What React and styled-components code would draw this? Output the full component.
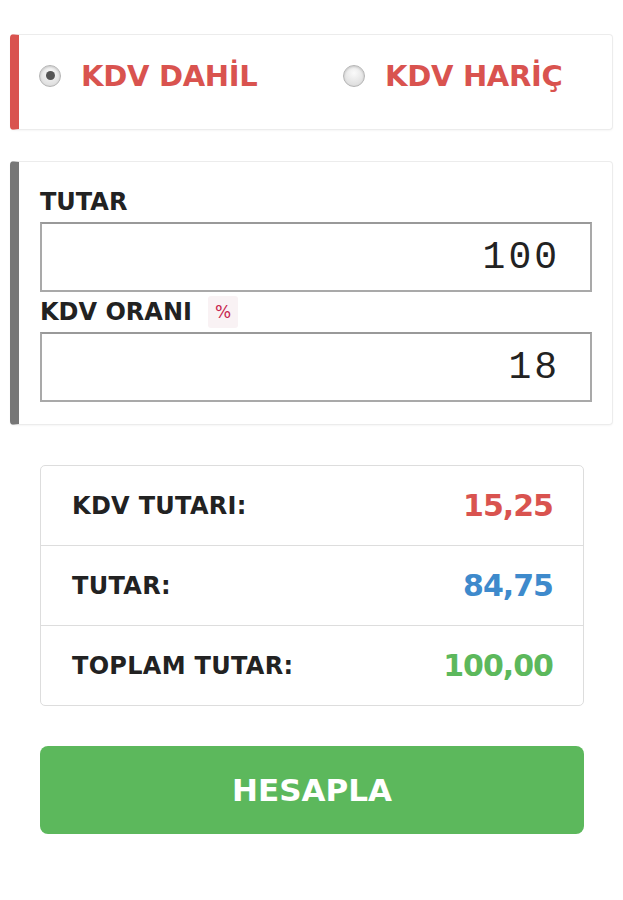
import React, { useState } from "react";
import styled, { createGlobalStyle } from "styled-components";

const GlobalStyle = createGlobalStyle`
  html, body {
    margin: 0;
    padding: 0;
    background: #fff;
  }
  body {
    font-family: "DejaVu Sans", "Liberation Sans", sans-serif;
    color: #222;
  }
`;

const Page = styled.div`
  width: 623px;
  padding: 34px 10px 40px;
  box-sizing: border-box;
`;

const Panel = styled.section`
  border: 1px solid #ececec;
  border-left: 9px solid ${(p) => p.accent};
  border-radius: 4px;
  box-shadow: 0 1px 2px rgba(0, 0, 0, 0.04);
  background: #fff;
  box-sizing: border-box;
  margin-bottom: 31px;
`;

const TypePanel = styled(Panel)`
  height: 96px;
  display: grid;
  grid-template-columns: 304px 1fr;
  align-items: center;
  padding: 0 0 13px 20px;
`;

const Option = styled.label`
  display: flex;
  align-items: center;
  gap: 20px;
  cursor: pointer;
  font-size: 29px;
  font-weight: 700;
  color: #d9534f;
  letter-spacing: -0.3px;
`;

const RadioDot = styled.span`
  width: 22px;
  height: 22px;
  border-radius: 50%;
  box-sizing: border-box;
  border: 1px solid #b5b5b5;
  background: radial-gradient(circle at 50% 35%, #fafafa, #d6d6d6);
  box-shadow: inset 0 1px 2px rgba(0, 0, 0, 0.15);
  display: flex;
  align-items: center;
  justify-content: center;
  &::after {
    content: "";
    width: 9px;
    height: 9px;
    border-radius: 50%;
    background: ${(p) => (p.checked ? "#555" : "transparent")};
  }
`;

const FormPanel = styled(Panel)`
  padding: 25px 20px 22px 21px;
`;

const FieldLabel = styled.div`
  display: flex;
  align-items: center;
  gap: 16px;
  height: 30px;
  line-height: 30px;
  font-size: 24px;
  font-weight: 700;
  color: #222;
  margin: ${(p) => (p.first ? "0 0 5px" : "5px 0 5px")};
`;

const Badge = styled.span`
  display: inline-block;
  height: 32px;
  line-height: 32px;
  padding: 0 7px;
  background: #f9f2f4;
  color: #c7254e;
  font-size: 17px;
  font-weight: 400;
  border-radius: 3px;
`;

const NumberInput = styled.input`
  display: block;
  width: 100%;
  height: 70px;
  box-sizing: border-box;
  border: 2px solid #a9a9a9;
  border-top-color: #999;
  padding: 0 30px 0 10px;
  text-align: right;
  font-family: "Liberation Mono", "DejaVu Sans Mono", monospace;
  font-size: 38px;
  letter-spacing: 3px;
  color: #222;
  background: #fff;
  outline: none;
`;

const Results = styled.div`
  margin: 40px 29px 40px 30px;
  border: 1px solid #ddd;
  border-radius: 5px;
  overflow: hidden;
`;

const ResultRow = styled.div`
  height: 79px;
  display: flex;
  align-items: center;
  justify-content: space-between;
  padding: 0 30px 0 31px;
  & + & {
    border-top: 1px solid #ddd;
  }
`;

const ResultLabel = styled.span`
  font-size: 24px;
  font-weight: 700;
  color: #222;
  letter-spacing: 0.3px;
`;

const ResultValue = styled.span`
  font-size: 30px;
  font-weight: 700;
  letter-spacing: -1px;
  color: ${(p) => p.color};
`;

const CalcButton = styled.button`
  display: block;
  width: calc(100% - 59px);
  margin: 0 29px 0 30px;
  height: 88px;
  border: none;
  border-radius: 8px;
  background: #5cb85c;
  color: #fff;
  font-family: "DejaVu Sans", sans-serif;
  font-size: 31px;
  font-weight: 700;
  cursor: pointer;
`;

export default function App() {
  const [mode, setMode] = useState("dahil");
  const [amount, setAmount] = useState("100");
  const [rate, setRate] = useState("18");

  return (
    <Page>
      <GlobalStyle />
      <TypePanel accent="#d9534f">
        <Option onClick={() => setMode("dahil")}>
          <RadioDot checked={mode === "dahil"} />
          KDV DAHİL
        </Option>
        <Option onClick={() => setMode("haric")}>
          <RadioDot checked={mode === "haric"} />
          KDV HARİÇ
        </Option>
      </TypePanel>

      <FormPanel accent="#777">
        <FieldLabel first>TUTAR</FieldLabel>
        <NumberInput value={amount} onChange={(e) => setAmount(e.target.value)} />
        <FieldLabel>
          KDV ORANI <Badge>%</Badge>
        </FieldLabel>
        <NumberInput value={rate} onChange={(e) => setRate(e.target.value)} />
      </FormPanel>

      <Results>
        <ResultRow>
          <ResultLabel>KDV TUTARI:</ResultLabel>
          <ResultValue color="#d9534f">15,25</ResultValue>
        </ResultRow>
        <ResultRow>
          <ResultLabel>TUTAR:</ResultLabel>
          <ResultValue color="#3e8acc">84,75</ResultValue>
        </ResultRow>
        <ResultRow>
          <ResultLabel>TOPLAM TUTAR:</ResultLabel>
          <ResultValue color="#5cb85c">100,00</ResultValue>
        </ResultRow>
      </Results>

      <CalcButton>HESAPLA</CalcButton>
    </Page>
  );
}
